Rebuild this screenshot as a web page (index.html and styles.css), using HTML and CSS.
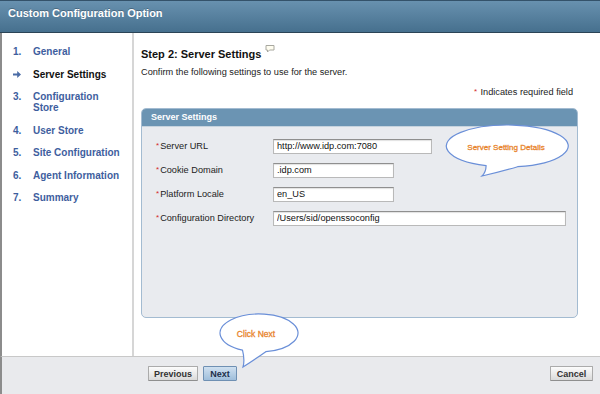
FILE: index.html
```html
<!doctype html>
<html lang="en">
<head>
  <meta charset="utf-8" />
  <meta name="viewport" content="width=device-width,initial-scale=1" />
  <title>Custom Configuration Option</title>
  <link rel="stylesheet" href="styles.css">
</head>
<body>
  <div class="wizard">
    <div class="titlebar">Custom Configuration Option</div>

    <div class="main">
      <ol class="steps">
        <li><span class="num">1.</span><a href="#">General</a></li>
        <li class="current">
          <span class="num"><svg width="8" height="7" viewBox="0 0 8 7"><path d="M0 2.4h4.2V0L8 3.5 4.2 7V4.6H0z" fill="#4b6ca6"/></svg></span>
          <span>Server Settings</span>
        </li>
        <li><span class="num">3.</span><a href="#">Configuration<br>Store</a></li>
        <li><span class="num">4.</span><a href="#">User Store</a></li>
        <li><span class="num">5.</span><a href="#">Site Configuration</a></li>
        <li><span class="num">6.</span><a href="#">Agent Information</a></li>
        <li><span class="num">7.</span><a href="#">Summary</a></li>
      </ol>

      <div class="content">
        <h2>Step 2: Server Settings<svg class="help" width="10" height="8" viewBox="0 0 10 8"><path d="M1 .5h8v4.5H4.5L2.5 7V5H1z" fill="#fffdf0" stroke="#a8a8a0" stroke-width="1"/></svg></h2>
        <p class="intro">Confirm the following settings to use for the server.</p>
        <p class="req"><span class="star">*</span> Indicates required field</p>

        <div class="panel">
          <div class="panel-head">Server Settings</div>
          <div class="panel-body">
            <div class="row">
              <label><span class="star">*</span>Server URL</label>
              <input class="field w-url" type="text" value="http://www.idp.com:7080">
            </div>
            <div class="row">
              <label><span class="star">*</span>Cookie Domain</label>
              <input class="field w-sm" type="text" value=".idp.com">
            </div>
            <div class="row">
              <label><span class="star">*</span>Platform Locale</label>
              <input class="field w-sm" type="text" value="en_US">
            </div>
            <div class="row">
              <label><span class="star">*</span>Configuration Directory</label>
              <input class="field w-lg" type="text" value="/Users/sid/openssoconfig">
            </div>
          </div>
        </div>
      </div>
    </div>

    <div class="footer">
      <button class="btn">Previous</button>
      <button class="btn next">Next</button>
      <button class="btn cancel">Cancel</button>
    </div>

    <!-- annotation balloons drawn over the page -->
    <svg class="callout callout-details" width="136" height="62" viewBox="0 0 136 62">
      <path d="M77.6 48.7A61 21 0 1 0 46.1 47.7Q46 54 42 58Q60 54 77.6 48.7Z" fill="#fff" stroke="#6a8fd8" stroke-width="1.2"/>
      <text x="66" y="32" text-anchor="middle">Server Setting Details</text>
    </svg>
    <svg class="callout callout-next" width="84" height="58" viewBox="0 0 84 58">
      <path d="M47.8 39.7A39 19 0 1 0 24.5 38.2Q27 48 25 55Q36 48 47.8 39.7Z" fill="#fff" stroke="#6a8fd8" stroke-width="1.2"/>
      <text x="38" y="25" text-anchor="middle">Click Next</text>
    </svg>
  </div>
</body>
</html>
```

FILE: styles.css
```css
*{box-sizing:border-box}
html,body{margin:0;height:100%}
body{
  font-family:"Liberation Sans",Arial,sans-serif;
  color:#222;
  background:#fff;
}

.wizard{
  position:relative;
  width:600px;
  height:394px;
  display:flex;
  flex-direction:column;
  overflow:hidden;
}

.titlebar{
  flex:none;
  height:33px;
  padding:5px 8px 0;
  color:#fff;
  font-weight:bold;
  font-size:11px;
  line-height:14px;
  background:linear-gradient(#6891af,#46708e);
  border-top:1px solid #34526a;
  border-bottom:1px solid #2b4456;
  text-shadow:0 -1px 0 rgba(0,0,0,.25);
}

.main{
  flex:1;
  display:flex;
  border-left:2px solid #8c8c8c;
}

/* left step list */
.steps{
  list-style:none;
  margin:0;
  width:132px;
  flex:none;
  padding:13px 0 0 11px;
  border-right:2px solid #d6d6d6;
  display:flex;
  flex-direction:column;
  gap:11.5px;
}
.steps li{
  display:flex;
  font-size:10px;
  line-height:11px;
  font-weight:bold;
  color:#3e5e9e;
}
.steps .num{width:20px;flex:none}
.steps .num svg{margin-top:2px}
.steps a{color:#3e5e9e;text-decoration:none}
.steps .current{color:#111}

/* right pane */
.content{
  flex:1;
  padding:14px 22px 0 7px;
}
h2{
  margin:0;
  font-size:11px;
  line-height:14px;
  color:#111;
}
.help{vertical-align:top;margin:-2px 0 0 4px}
.intro{
  margin:5px 0 0;
  font-size:9.2px;
  line-height:12px;
  color:#222;
}
.req{
  margin:8px 0 0;
  padding-right:5px;
  text-align:right;
  font-size:9.2px;
  line-height:12px;
  color:#222;
}
.star{color:#d42a2a;font-size:8px;vertical-align:top;margin-right:1px}

.panel{
  margin-top:10px;
  width:437px;
  height:210px;
  border:1px solid #a3bbd1;
  border-radius:5px;
  background:#e9ebef;
  overflow:hidden;
}
.panel-head{
  height:18px;
  padding-left:9px;
  font-size:9px;
  line-height:17px;
  font-weight:bold;
  color:#fff;
  background:#6b94b3;
  border-bottom:1px solid #c6d3de;
}
.panel-body{padding-top:7px}
.row{
  display:flex;
  align-items:center;
  height:24px;
}
.row label{
  width:131px;
  flex:none;
  padding-left:14px;
  font-size:9.2px;
  color:#222;
}
.field{
  height:15px;
  padding:0 3px;
  font-family:inherit;
  font-size:9.2px;
  color:#111;
  background:#fff;
  border:1px solid #b9b9b9;
  border-top-color:#8f8f8f;
  box-shadow:inset 0 1px 1px rgba(0,0,0,.12);
  outline:none;
}
.w-url{width:159px}
.w-sm{width:121px}
.w-lg{width:293px}

/* bottom button bar */
.footer{
  flex:none;
  height:38px;
  display:flex;
  align-items:flex-start;
  gap:5px;
  padding:9px 7px 0 146px;
  background:#e9eaed;
  border-top:1px solid #c8c8c8;
  border-left:2px solid #8c8c8c;
}
.btn{
  appearance:none;
  height:15px;
  padding:0;
  font-family:inherit;
  font-size:9px;
  font-weight:bold;
  color:#333;
  background:linear-gradient(#fcfcfc,#dadada);
  border:1px solid #ababab;
  border-bottom-color:#8f8f8f;
  border-radius:1px;
  width:50px;
}
.btn.next{
  width:34px;
  color:#1d2f4a;
  background:linear-gradient(#cfe0f0,#9fbedb);
  border-color:#6f90b3;
}
.btn.cancel{width:43px;margin-left:auto}

.callout{position:absolute}
.callout text{
  font-family:"Liberation Sans",Arial,sans-serif;
  fill:#e8842c;
  stroke:#e8842c;
  stroke-width:.3px;
}
.callout-details{left:440px;top:118px}
.callout-details text{font-size:8px}
.callout-next{left:218px;top:312px}
.callout-next text{font-size:8.5px}
```
